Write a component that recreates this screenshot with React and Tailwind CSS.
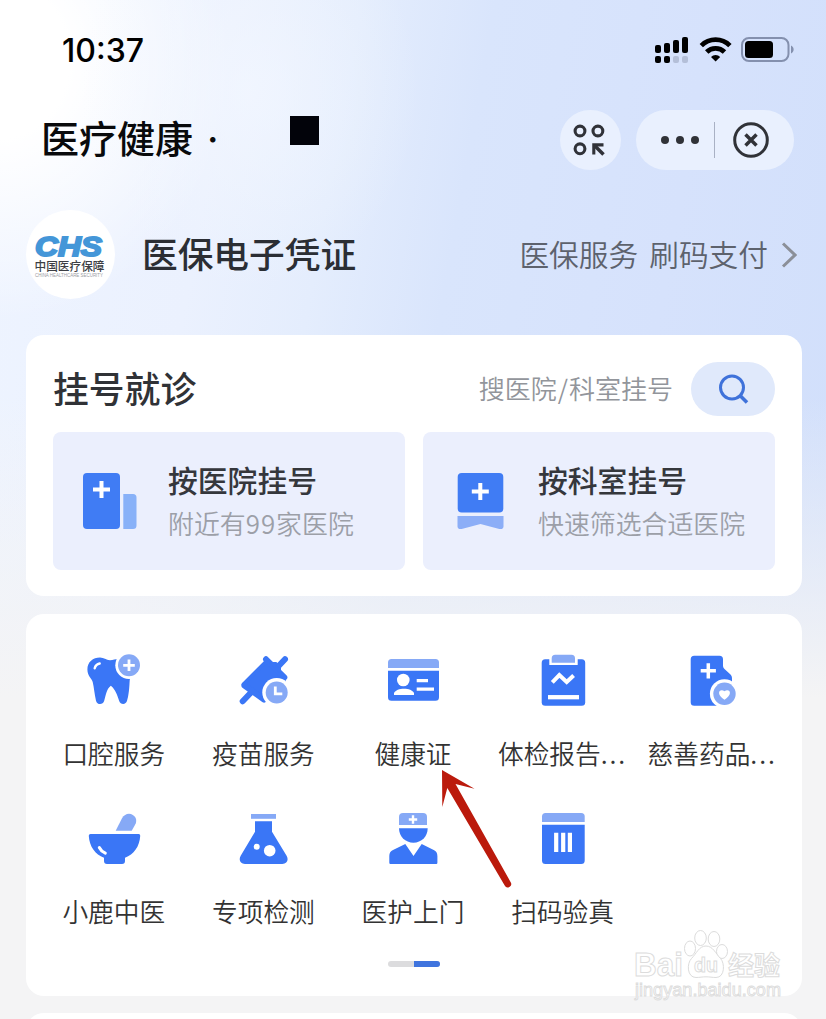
import React from "react";

const BLUE = "#3a76f6";
const LIGHT = "#86a9f6";

function StatusIcons() {
  const bars = [
    { x: 0, y: 8 },
    { x: 9, y: 6 },
    { x: 18, y: 3 },
    { x: 27, y: 0 },
  ];
  return (
    <svg className="w-[140px] h-[28px]" viewBox="0 0 140 28">
      {bars.map((b, i) => (
        <g key={b.x}>
          <rect x={b.x} y={b.y} width="6" height={16 - b.y} rx="2" fill="#000" />
          <rect x={b.x} y="19" width="6" height="7" rx="2" fill={i < 2 ? "#000" : "#b4bfd8"} />
        </g>
      ))}
      <g fill="none" stroke="#000" strokeWidth="4.800">
        <path d="M46.300 8.600a20.300 20.300 0 0 1 28.600 0" />
        <path d="M51.700 15a12.600 12.600 0 0 1 17.800 0" />
      </g>
      <path d="M60.600 24.500l-4.600-4.500a6.500 6.500 0 0 1 9.200 0z" fill="#000" />
      <rect x="87" y="1" width="46.500" height="23" rx="7" fill="none" stroke="#8490ae" strokeWidth="2" />
      <rect x="90" y="4" width="28" height="17" rx="3.500" fill="#000" />
      <path d="M136 8.500c3.500 1.500 3.500 6.500 0 8z" fill="#8490ae" />
    </svg>
  );
}

function ScanIcon() {
  return (
    <svg className="w-8 h-8 mr-[3px]" viewBox="0 0 32 32" fill="none" stroke="#303238" strokeWidth="3.100">
      <circle cx="7" cy="7" r="4.900" />
      <circle cx="24.900" cy="7" r="4.900" />
      <circle cx="7" cy="24.800" r="4.900" />
      <path d="M20.800 30.500V20.900H30.500" />
      <path d="M21.500 21.500l9 9" strokeWidth="3.600" />
    </svg>
  );
}

function ChsLogo() {
  return (
    <svg className="w-[89px] h-[89px]" viewBox="0 0 89 89">
      <text x="9" y="45.500" fill="#4496d8" stroke="#4496d8" strokeWidth="2" fontFamily="Liberation Sans, sans-serif" fontSize="28.500" fontWeight="700" fontStyle="italic" textLength="67" lengthAdjust="spacingAndGlyphs">CHS</text>
      <text x="8.500" y="60.500" fill="#3c3e44" fontFamily="Noto Sans CJK SC, sans-serif" fontSize="12" fontWeight="500" textLength="70" lengthAdjust="spacingAndGlyphs">中国医疗保障</text>
      <text x="9" y="67" fill="#9a9ca3" fontFamily="Liberation Sans, sans-serif" fontSize="4.500" textLength="68" lengthAdjust="spacingAndGlyphs">CHINA HEALTHCARE SECURITY</text>
    </svg>
  );
}

function HospitalIcon() {
  return (
    <svg className="w-[54px] h-14" viewBox="0 0 54 56">
      <rect width="37" height="56" rx="4" fill="#407cf4" />
      <path d="M40.300 21h9.700a3.500 3.500 0 0 1 3.500 3.500v28a3.500 3.500 0 0 1-3.500 3.500h-9.700z" fill="#88b1f8" />
      <path d="M18.500 8v17M10 16.500h17" stroke="#fff" strokeWidth="4" />
    </svg>
  );
}

function DepartmentIcon() {
  return (
    <svg className="w-[54px] h-14" viewBox="0 0 54 56">
      <rect x="4.700" width="45.600" height="39.500" rx="4" fill="#407cf4" />
      <path d="M4.500 43h46v10.500a2.800 2.800 0 0 1-3.800 2.600L27.500 51 8.300 56.100a2.800 2.800 0 0 1-3.800-2.600z" fill="#8caef7" />
      <path d="M27.300 10v17M18.800 18.500h17" stroke="#fff" strokeWidth="4" />
    </svg>
  );
}

const icons = {
  tooth: (
    <>
      <path d="M3.400 18.500C3.400 11 9 6.600 16 6.600c4 0 6 2.500 10 2.700 3.500 0 5-1.200 8-1.200 9 0 13.500 6 13 14-.2 4-1.400 5.500-1.400 9-.4 9-1.400 15-2.500 18.500-1 4.500-6.600 4.500-8 .2-1.600-5-4-12-8.300-15-4.500 3.500-5 10-6.600 15-1.300 4.500-7.200 4.300-8.200-.1C10.500 43.500 10 36 8.700 31c-.8-3.500-5.300-6-5.300-12.500z" fill={BLUE} />
      <path d="M10.700 17.300c.6-2.600 2.400-4.300 5-4.800" stroke="#fff" strokeWidth="2.400" strokeLinecap="round" fill="none" />
      <circle cx="45" cy="14.300" r="13.700" fill="#fff" />
      <circle cx="45" cy="14.300" r="11" fill={LIGHT} />
      <path d="M45 8.500v11.600M39.200 14.300h11.600" stroke="#fff" strokeWidth="2.800" />
    </>
  ),
  syringe: (
    <>
      <g fill={BLUE} stroke={BLUE} strokeLinecap="round" strokeLinejoin="round">
        <path d="M10.500 33.300L32 12l3-2 16 16v4L32.500 48z" strokeWidth="4" />
        <path d="M33 8.300L51.300 26.500M52 8.300l-9 9.500M9.700 50.300l9-9.500M11.500 34.500L31 48.500" strokeWidth="6" />
        <path d="M38 12h5l4 4v5z" strokeWidth="2" />
      </g>
      <circle cx="43.700" cy="41.500" r="14.400" fill="#fff" />
      <circle cx="43.700" cy="41.500" r="11" fill={LIGHT} />
      <path d="M42.300 35.500v7.300h7" stroke="#fff" strokeWidth="2.800" fill="none" />
    </>
  ),
  idCard: (
    <>
      <path d="M5 17v-5.500A3.500 3.500 0 0 1 8.500 8h44a3.500 3.500 0 0 1 3.500 3.500V17z" fill={LIGHT} />
      <path d="M5 19.700h51v26.500a3.500 3.500 0 0 1-3.500 3.500h-44A3.500 3.500 0 0 1 5 46.200z" fill={BLUE} />
      <circle cx="20.300" cy="29" r="6.300" fill="#fff" />
      <path d="M11 44v-2c2.500-5.700 17.500-5.700 20 0v2z" fill="#fff" />
      <path d="M33.700 29.700H45M33.700 38.200H51" stroke="#fff" strokeWidth="3.200" />
    </>
  ),
  clipboard: (
    <>
      <rect x="8.700" y="8.300" width="43.500" height="46.500" rx="3.500" fill={BLUE} />
      <path d="M16.300 6h28.400v8H16.300z" fill="#fff" />
      <path d="M18.700 11.700v-4.500a3.500 3.500 0 0 1 3.500-3.500h16.300A3.500 3.500 0 0 1 42 7.200v4.500z" fill={LIGHT} />
      <path d="M19.300 31.300l7-7.300 7.400 7 6.900-6.500" stroke="#fff" strokeWidth="4" fill="none" />
      <path d="M15 46.200h31" stroke="#fff" strokeWidth="4.300" />
    </>
  ),
  medicine: (
    <>
      <path d="M12.200 4.700h25.300A3.500 3.500 0 0 1 41 8.200v6.300c0 1.500.5 2.500 1.500 3.500l6 5.500c1.500 1.500 1.500 3 1.500 5v26.200H12.200a3.500 3.500 0 0 1-3.500-3.500v-43a3.500 3.500 0 0 1 3.500-3.500z" fill={BLUE} />
      <path d="M26.300 12.200v15.200M18.700 19.800h15.200" stroke="#fff" strokeWidth="3.500" />
      <path d="M38 50h14v8H38z" fill="#fff" />
      <circle cx="42.500" cy="42.800" r="14.600" fill="#fff" />
      <circle cx="42.500" cy="42.800" r="11.200" fill={LIGHT} />
      <path d="M42.500 48.800c-9-5.500-5.300-11.800 0-8.600 5.300-3.200 9 3.100 0 8.600z" fill="#fff" />
    </>
  ),
  mortar: (
    <>
      <path d="M31.700 21.700L38 9.200C40.500 5 45 3.600 48.800 5.900c4 2.500 4 6.500 2.400 9.600l-3.500 6.200z" fill={LIGHT} />
      <path d="M6.500 25h48.200c1 0 1.600.7 1.500 2-.6 10.500-6.400 18.500-15.200 21.800V52c0 2-1 3-3 3H23c-2 0-3-1-3-3v-3.200C11.200 45.500 5.400 37.500 4.800 27c0-1.300.7-2 1.700-2z" fill={BLUE} />
      <path d="M15.300 38.500c1.200 2.500 3.200 4.500 6 5.700" stroke="#fff" strokeWidth="3" strokeLinecap="round" fill="none" />
    </>
  ),
  flask: (
    <>
      <path d="M18 5h25v4.800H18z" fill={LIGHT} />
      <path d="M22 12.300h17v10.400l14.600 24c2.300 4 .4 8.300-4.300 8.300H12c-4.700 0-6.600-4.300-4.300-8.300L22 22.700z" fill={BLUE} />
      <circle cx="23.700" cy="37.700" r="3" fill="#fff" />
      <circle cx="36.700" cy="41.700" r="5.800" fill="#fff" />
    </>
  ),
  doctor: (
    <>
      <path d="M16 16V8a4 4 0 0 1 4-4h20a4 4 0 0 1 4 4v8z" fill={LIGHT} />
      <path d="M30 6.300v8.400M25.800 10.500h8.400" stroke="#fff" strokeWidth="2.400" />
      <path d="M16 19.300h28.700c0 8.500-6.300 14.400-14.300 14.400S16 27.800 16 19.300z" fill={BLUE} />
      <path d="M22.300 35l8.200 12 8.200-12 12 6c2.500 1.300 3.700 3 3.700 6v6.500c0 1-.5 1.500-1.500 1.500H7.800c-1 0-1.500-.5-1.500-1.500V47c0-3 1.200-4.700 3.700-6z" fill={BLUE} />
    </>
  ),
  barcode: (
    <>
      <path d="M9 13V7.500A3.500 3.500 0 0 1 12.500 4h35.700a3.500 3.500 0 0 1 3.500 3.500V13z" fill={LIGHT} />
      <path d="M9 15.700h42.700v35.800a3.500 3.500 0 0 1-3.500 3.500H12.500A3.500 3.500 0 0 1 9 51.500z" fill={BLUE} />
      <path d="M23.200 23.700V43M30.200 23.700V43M36.900 23.700V43" stroke="#fff" strokeWidth="4.200" />
    </>
  ),
};

const services = [
  { icon: "tooth", name: "口腔服务" },
  { icon: "syringe", name: "疫苗服务" },
  { icon: "idCard", name: "健康证" },
  { icon: "clipboard", name: "体检报告", more: true },
  { icon: "medicine", name: "慈善药品", more: true },
  { icon: "mortar", name: "小鹿中医" },
  { icon: "flask", name: "专项检测" },
  { icon: "doctor", name: "医护上门" },
  { icon: "barcode", name: "扫码验真" },
];

function ServiceItem({ icon, name, more }) {
  return (
    <div className="flex flex-col items-center h-[158px]">
      <svg className="w-[60px] h-[60px]" viewBox="0 0 60 60">{icons[icon]}</svg>
      <span className="mt-[22px] text-[25.700px] leading-10 font-[350] text-[#333] whitespace-nowrap">
        {name}
        {more && <span className="tracking-[1.900px]">...</span>}
      </span>
    </div>
  );
}

function RegisterTile({ icon, title, desc }) {
  return (
    <div className="flex-1 h-[138px] rounded-lg bg-[#ebeffd] flex pl-[30px]">
      <div className="pt-[41px]">{icon}</div>
      <div className="pl-[31px] pt-[27px]">
        <div className="text-[29.800px] leading-10 font-medium text-[#35373c] whitespace-nowrap">{title}</div>
        <div className="mt-1 text-[25.900px] leading-10 font-[350] text-[#9c9fa8] whitespace-nowrap">{desc}</div>
      </div>
    </div>
  );
}

function Watermark() {
  return (
    <svg className="absolute left-[630px] top-[926px] w-[156px] h-[76px]" viewBox="0 0 156 76" fill="#fff" stroke="#dcdcdc" strokeWidth="1">
      <text x="4" y="50" fontFamily="Liberation Sans, sans-serif" fontSize="33" fontWeight="700" textLength="49" lengthAdjust="spacingAndGlyphs">Bai</text>
      <ellipse cx="60" cy="22.500" rx="5.500" ry="7.500" />
      <ellipse cx="70.500" cy="12" rx="5.800" ry="7.500" />
      <ellipse cx="84" cy="13" rx="5.800" ry="7.500" />
      <ellipse cx="92" cy="25.500" rx="5.500" ry="7" />
      <path d="M76 20c7 0 10 8 14.500 12.500S95 51.500 86 51.500c-4 0-6-.7-10-.7s-6 .7-10 .7c-9 0-9.500-14-4.500-19S69 20 76 20z" />
      <text x="64" y="46" fontFamily="Liberation Sans, sans-serif" fontSize="21" fontWeight="700" textLength="24" lengthAdjust="spacingAndGlyphs">du</text>
      <text x="98" y="49" fontFamily="Noto Sans CJK SC, sans-serif" fontSize="26" fontWeight="700">经验</text>
      <text x="5" y="70" strokeWidth="0.900" fontFamily="Liberation Sans, sans-serif" fontSize="18" textLength="146" lengthAdjust="spacingAndGlyphs">jingyan.baidu.com</text>
    </svg>
  );
}

function PointerArrow() {
  return (
    <svg className="absolute left-[438px] top-[766px] w-20 h-[126px]" viewBox="0 0 80 126" fill="#bb1a0c">
      <path d="M4 4l32.500 18.800L17.500 18 72.700 116.200a3.400 3.400 0 0 1-6 3.400L9.300 22 4.300 41z" />
    </svg>
  );
}

export default function App() {
  return (
    <div className="relative w-[826px] h-[1019px] overflow-hidden bg-[#f4f4f5] font-['Noto_Sans_CJK_SC',sans-serif]">
      <div className="bg-[linear-gradient(to_bottom,transparent_55%,#f4f4f5_97%),radial-gradient(ellipse_170px_200px_at_250px_90px,#f4f8ffaa_0%,transparent_100%),radial-gradient(ellipse_230px_260px_at_0px_60px,#ffffff_30%,transparent_100%),linear-gradient(100deg,#eef4ff_0%,#ebf1fe_25%,#e4edfd_38%,#d9e5fc_52%,#d6e2fc_75%,#d1dffb_100%)] h-[720px]">
        <div className="h-[100px] pl-[62px] pr-[31px] pt-0.5 flex items-center justify-between">
          <span className="font-['Inter',sans-serif] text-[32px] font-medium leading-none text-black">10:37</span>
          <StatusIcons />
        </div>

        <header className="mt-[10px] h-[60px] pl-[41px] pr-8 flex items-center">
          <h1 className="w-[249px] pb-1 text-[38px] leading-[56px] font-medium text-[#090a0c] whitespace-nowrap">
            医疗健康<span className="ml-[14px] font-['Inter',sans-serif]">·</span>
          </h1>
          <div className="w-[29px] h-[29px] mb-[19px] bg-[#02030a]" />
          <div className="ml-auto w-[61px] h-[60px] rounded-full bg-[#e9f0fe] flex items-center justify-center">
            <ScanIcon />
          </div>
          <div className="ml-[15px] w-[158px] h-[60px] rounded-full bg-[#e9f0fe] flex items-center">
            <div className="w-[79px] h-9 pl-[9px] border-r border-[#a9b1c4] flex items-center justify-center gap-[7px]">
              <i className="w-2 h-2 rounded-full bg-[#303238]" />
              <i className="w-2 h-2 rounded-full bg-[#303238]" />
              <i className="w-2 h-2 rounded-full bg-[#303238]" />
            </div>
            <svg className="ml-[18px] w-9 h-9" viewBox="0 0 36 36" fill="none" stroke="#303238">
              <circle cx="18" cy="18" r="16.300" strokeWidth="3" />
              <path d="M12.500 12.500l11 11M23.500 12.500l-11 11" strokeWidth="3.500" />
            </svg>
          </div>
        </header>

        <div className="mt-10 h-[89px] pl-[26px] pr-[29px] flex items-center">
          <div className="w-[89px] h-[89px] rounded-full bg-white overflow-hidden">
            <ChsLogo />
          </div>
          <h2 className="ml-[27px] pb-[3px] text-[35.700px] leading-none font-medium text-[#2b2e34]">医保电子凭证</h2>
          <span className="ml-auto pb-0.5 text-[29.700px] leading-none font-[350] text-[#5d626d] [word-spacing:4.500px]">医保服务 刷码支付</span>
          <svg className="ml-[13px] w-4 h-7" viewBox="0 0 16 28" fill="none" stroke="#8b8f98" strokeWidth="3">
            <path d="M2 2.500L14 14 2 25.500" />
          </svg>
        </div>

        <section className="mx-6 mt-9 ml-[26px] h-[261px] rounded-[18px] bg-white px-[27px] pt-[27px]">
          <div className="h-[54px] flex items-center">
            <h3 className="pb-[3px] text-[35.800px] leading-none font-medium text-[#303236]">挂号就诊</h3>
            <span className="ml-auto pb-0.5 text-[26px] leading-none font-[350] text-[#92959b]">
              搜医院<span className="px-px">/</span>科室挂号
            </span>
            <button className="ml-[18px] w-[84px] h-[54px] rounded-full bg-[#e0e9fb] flex items-center justify-center">
              <svg className="w-8 h-8" viewBox="0 0 32 32" fill="none" stroke="#3f72da" strokeWidth="3">
                <circle cx="15" cy="14.500" r="11.500" />
                <path d="M23 22.500l7 7" strokeWidth="3.500" />
              </svg>
            </button>
          </div>
          <div className="mt-4 flex gap-[18px]">
            <RegisterTile
              icon={<HospitalIcon />}
              title="按医院挂号"
              desc={<>附近有<span className="tracking-[1px]">99</span>家医院</>}
            />
            <RegisterTile icon={<DepartmentIcon />} title="按科室挂号" desc="快速筛选合适医院" />
          </div>
        </section>

        <section className="mx-6 ml-[26px] mt-[18px] h-[382px] rounded-[18px] bg-white pt-[37px] pl-[13px] pr-[15px]">
          <div className="h-[310px] grid grid-cols-5">
            {services.map((s) => (
              <ServiceItem key={s.name} icon={s.icon} name={s.name} more={s.more} />
            ))}
          </div>
          {/* pager */}
          <div className="ml-[349px] w-[52px] h-1.5 rounded-full bg-[#dcdcde] overflow-hidden flex justify-end">
            <div className="w-[26px] bg-[#3f74de]" />
          </div>
        </section>

        <section className="mx-6 ml-[26px] mt-[17px] h-10 rounded-[18px] bg-white" />
      </div>

      <Watermark />
      <PointerArrow />
    </div>
  );
}
